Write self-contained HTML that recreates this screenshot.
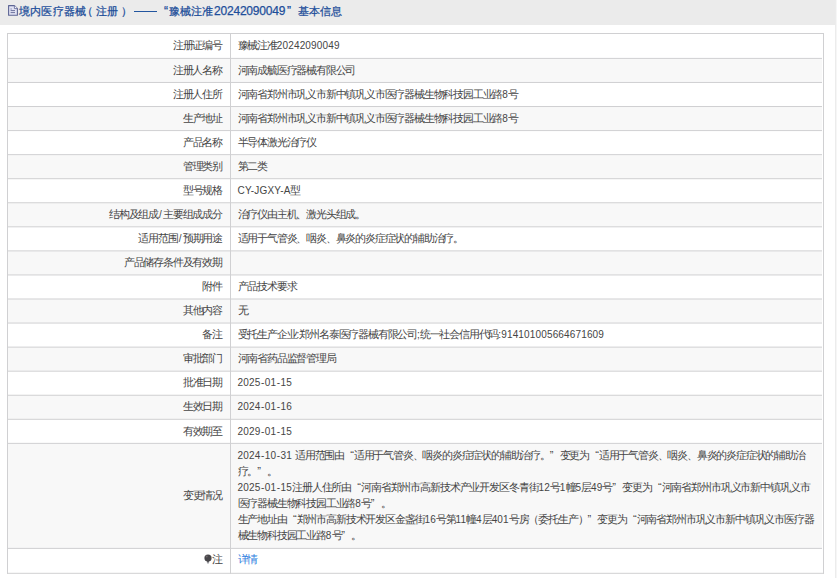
<!DOCTYPE html>
<html><head><meta charset="utf-8">
<style>
html,body{margin:0;padding:0;background:#fff;}
body{width:837px;height:578px;overflow:hidden;position:relative;font-family:"Liberation Sans",sans-serif;color:#454545;}
.hdr{position:absolute;left:0;top:0;width:835px;height:25px;background:#ebebeb;}
.hdr div{position:absolute;top:2.9px;color:#1d4e9a;-webkit-text-stroke:0.25px #1d4e9a;font-size:11px;letter-spacing:0.3px;line-height:16px;white-space:nowrap;}
.hdr svg{position:absolute;left:7.5px;top:5.3px;}
.rb{position:absolute;left:835px;top:0;width:1px;height:578px;background:#ececec;border-right:1px solid #f6f6f6}
.bg{position:absolute;left:7px;width:815px;background:#f8f8f8;}
.lb{position:absolute;right:615.1px;font-size:11px;letter-spacing:-1.2px;line-height:16px;white-space:nowrap;text-align:right;}
.vl{position:absolute;left:237.6px;font-size:11px;letter-spacing:-1.2px;line-height:16px;white-space:nowrap;}
.lq{display:inline-block;width:9.82px;text-align:right;letter-spacing:0}
.en{letter-spacing:0.15px;font-size:10px}
.hy{margin:0 0.45px}
.sl{margin:0 1.1px}
.rq{display:inline-block;width:9.82px;text-align:left;letter-spacing:0}
svg.grid{position:absolute;left:0;top:0;}
a{color:#2d80e0;text-decoration:none;}
</style></head><body>
<div class="hdr">
<svg width="10" height="11" viewBox="0 0 10 11"><path d="M0.6 0.6H6.4L9.4 3.6V10.3H0.6Z" fill="#e2e3f4" stroke="#5d6594" stroke-width="1.1" stroke-linejoin="round"/><path d="M6.4 0.6V3.6H9.4" fill="#f4f4fb" stroke="#5d6594" stroke-width="0.8"/><path d="M2.6 5.6H7M2.6 7.6H7" stroke="#5d6594" stroke-width="0.9"/><rect x="2.6" y="3.5" width="1" height="1" fill="#5d6594"/></svg>
<div style="left:18.8px">境内医疗器械</div>
<div style="left:82px">（</div>
<div style="left:95.6px">注册</div>
<div style="left:121px">）</div>
<div style="left:133.8px;top:10.8px;width:23.2px;height:1px;background:#22559f;"></div>
<div style="left:164px;top:3px;font-size:12px;letter-spacing:0">“</div>
<div style="left:168.6px">豫械注准</div>
<div style="left:214px;top:3.4px;font-size:12px;letter-spacing:-0.2px">20242090049</div>
<div style="left:287px;top:3px;font-size:12px;letter-spacing:0">”</div>
<div style="left:297.6px">基本信息</div>
</div>
<div class="rb"></div>

<div class="bg" style="top:58.40px;height:24.06px"></div>
<div class="bg" style="top:106.52px;height:24.06px"></div>
<div class="bg" style="top:154.64px;height:24.06px"></div>
<div class="bg" style="top:202.76px;height:24.06px"></div>
<div class="bg" style="top:250.88px;height:24.06px"></div>
<div class="bg" style="top:299.00px;height:24.06px"></div>
<div class="bg" style="top:347.12px;height:24.06px"></div>
<div class="bg" style="top:395.24px;height:24.06px"></div>
<div class="bg" style="top:443.36px;height:105.04px"></div>
<div class="lb" style="top:37.15px">注册证编号</div>
<div class="vl" style="top:37.15px">豫械注准<span class="en">20242090049</span></div>
<div class="lb" style="top:61.63px">注册人名称</div>
<div class="vl" style="top:61.63px">河南成毓医疗器械有限公司</div>
<div class="lb" style="top:85.69px">注册人住所</div>
<div class="vl" style="top:85.69px">河南省郑州市巩义市新中镇巩义市医疗器械生物科技园工业路<span class="en">8</span>号</div>
<div class="lb" style="top:109.75px">生产地址</div>
<div class="vl" style="top:109.75px">河南省郑州市巩义市新中镇巩义市医疗器械生物科技园工业路<span class="en">8</span>号</div>
<div class="lb" style="top:133.81px">产品名称</div>
<div class="vl" style="top:133.81px">半导体激光治疗仪</div>
<div class="lb" style="top:157.87px">管理类别</div>
<div class="vl" style="top:157.87px">第二类</div>
<div class="lb" style="top:181.93px">型号规格</div>
<div class="vl" style="top:181.93px"><span class="en">CY-JGXY-A</span>型</div>
<div class="lb" style="top:205.99px">结构及组成<span class="en"><span class="sl">/</span></span>主要组成成分</div>
<div class="vl" style="top:205.99px">治疗仪由主机、激光头组成。</div>
<div class="lb" style="top:230.05px">适用范围<span class="en"><span class="sl">/</span></span>预期用途</div>
<div class="vl" style="top:230.05px">适用于气管炎、咽炎、鼻炎的炎症症状的辅助治疗。</div>
<div class="lb" style="top:254.11px">产品储存条件及有效期</div>
<div class="lb" style="top:278.17px">附件</div>
<div class="vl" style="top:278.17px">产品技术要求</div>
<div class="lb" style="top:302.23px">其他内容</div>
<div class="vl" style="top:302.23px">无</div>
<div class="lb" style="top:326.29px">备注</div>
<div class="vl" style="top:326.29px">受托生产企业<span class="en">:</span>郑州名泰医疗器械有限公司<span class="en">;</span>统一社会信用代码<span class="en">:914101005664671609</span></div>
<div class="lb" style="top:350.35px">审批部门</div>
<div class="vl" style="top:350.35px">河南省药品监督管理局</div>
<div class="lb" style="top:374.41px">批准日期</div>
<div class="vl" style="top:374.41px"><span class="en">2025<span class="hy">-</span>01<span class="hy">-</span>15</span></div>
<div class="lb" style="top:398.47px">生效日期</div>
<div class="vl" style="top:398.47px"><span class="en">2024<span class="hy">-</span>01<span class="hy">-</span>16</span></div>
<div class="lb" style="top:422.53px">有效期至</div>
<div class="vl" style="top:422.53px"><span class="en">2029<span class="hy">-</span>01<span class="hy">-</span>15</span></div>
<div class="lb" style="top:487.08px">变更情况</div>
<div class="lb" style="top:551.25px">注</div>
<div class="vl" style="top:551.45px"><a>详情</a></div>
<svg style="position:absolute;left:203.6px;top:554.3px" width="8" height="10" viewBox="0 0 8 10"><circle cx="4" cy="4" r="3.6" fill="#48464a"/><circle cx="2.7" cy="2.6" r="1" fill="#6e6a6c"/><path d="M2.9 7H5.1V8.6H2.9Z" fill="#58585c"/><rect x="3.1" y="8.6" width="1.8" height="0.9" fill="#a0a0a6"/></svg>
<div class="vl" style="top:446.80px;letter-spacing:-1.2px"><span class="en">2024<span class="hy">-</span>10<span class="hy">-</span>31 </span>适用范围由<span class="lq">“</span>适用于气管炎、咽炎的炎症症状的辅助治疗。<span class="rq">”</span>变更为<span class="lq">“</span>适用于气管炎、咽炎、鼻炎的炎症症状的辅助治</div>
<div class="vl" style="top:462.80px;letter-spacing:-1.2px">疗。<span class="rq">”</span>。</div>
<div class="vl" style="top:478.80px;letter-spacing:-1.14px"><span class="en">2025<span class="hy">-</span>01<span class="hy">-</span>15</span>注册人住所由<span class="lq">“</span>河南省郑州市高新技术产业开发区冬青街<span class="en">12</span>号<span class="en">1</span>幢<span class="en">5</span>层<span class="en">49</span>号<span class="rq">”</span>变更为<span class="lq">“</span>河南省郑州市巩义市新中镇巩义市</div>
<div class="vl" style="top:494.80px;letter-spacing:-1.2px">医疗器械生物科技园工业路<span class="en">8</span>号<span class="rq">”</span>。</div>
<div class="vl" style="top:510.80px;letter-spacing:-1.165px">生产地址由<span class="lq">“</span>郑州市高新技术开发区金盏街<span class="en">16</span>号第<span class="en">11</span>幢<span class="en">4</span>层<span class="en">401</span>号房（委托生产）<span class="rq">”</span>变更为<span class="lq">“</span>河南省郑州市巩义市新中镇巩义市医疗器</div>
<div class="vl" style="top:526.80px;letter-spacing:-1.2px">械生物科技园工业路<span class="en">8</span>号<span class="rq">”</span>。</div>
<svg class="grid" width="837" height="578" fill="#d0d0d2"><rect x="7" y="57.90" width="815" height="1"/><rect x="7" y="81.96" width="815" height="1"/><rect x="7" y="106.02" width="815" height="1"/><rect x="7" y="130.08" width="815" height="1"/><rect x="7" y="154.14" width="815" height="1"/><rect x="7" y="178.20" width="815" height="1"/><rect x="7" y="202.26" width="815" height="1"/><rect x="7" y="226.32" width="815" height="1"/><rect x="7" y="250.38" width="815" height="1"/><rect x="7" y="274.44" width="815" height="1"/><rect x="7" y="298.50" width="815" height="1"/><rect x="7" y="322.56" width="815" height="1"/><rect x="7" y="346.62" width="815" height="1"/><rect x="7" y="370.68" width="815" height="1"/><rect x="7" y="394.74" width="815" height="1"/><rect x="7" y="418.80" width="815" height="1"/><rect x="7" y="442.86" width="815" height="1"/><rect x="7" y="547.90" width="815" height="1"/><rect x="7" y="33.00" width="817" height="1"/><rect x="7" y="572.80" width="817" height="1"/><rect x="7" y="33.00" width="1" height="540.80"/><rect x="823" y="33.00" width="1" height="540.80"/><rect x="230" y="33.00" width="1" height="540.80"/></svg>
</body></html>
